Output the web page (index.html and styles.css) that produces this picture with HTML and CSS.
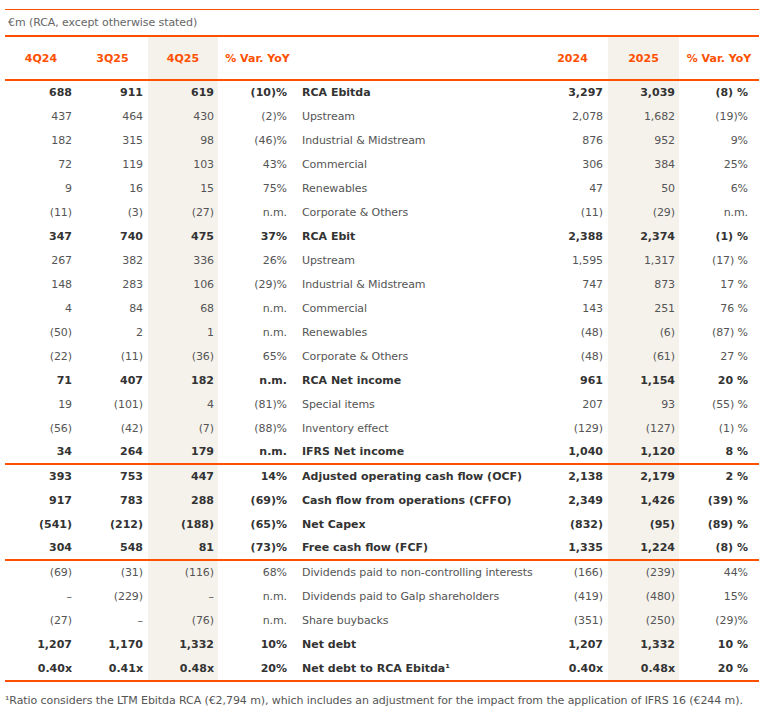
FILE: index.html
```html
<!DOCTYPE html>
<html lang="en">
<head>
<meta charset="utf-8">
<title>Key figures</title>
<link rel="stylesheet" href="styles.css">
</head>
<body>
<div class="report">
  <div class="caption">€m (RCA, except otherwise stated)</div>
  <table class="figures">
    <colgroup>
      <col class="c1"><col class="c2"><col class="c3"><col class="c4"><col class="c5"><col class="c6"><col class="c7"><col class="c8">
    </colgroup>
    <thead>
      <tr>
        <th>4Q24</th><th>3Q25</th><th class="shade">4Q25</th><th>% Var. YoY</th><th class="lbl"></th><th>2024</th><th class="shade">2025</th><th>% Var. YoY</th>
      </tr>
    </thead>
    <tbody>
      <tr class="b"><td>688</td><td>911</td><td class="shade">619</td><td class="pct">(10)%</td><td class="lbl">RCA Ebitda</td><td>3,297</td><td class="shade">3,039</td><td class="pct">(8) %</td></tr>
      <tr><td>437</td><td>464</td><td class="shade">430</td><td class="pct">(2)%</td><td class="lbl">Upstream</td><td>2,078</td><td class="shade">1,682</td><td class="pct">(19)%</td></tr>
      <tr><td>182</td><td>315</td><td class="shade">98</td><td class="pct">(46)%</td><td class="lbl">Industrial &amp; Midstream</td><td>876</td><td class="shade">952</td><td class="pct">9%</td></tr>
      <tr><td>72</td><td>119</td><td class="shade">103</td><td class="pct">43%</td><td class="lbl">Commercial</td><td>306</td><td class="shade">384</td><td class="pct">25%</td></tr>
      <tr><td>9</td><td>16</td><td class="shade">15</td><td class="pct">75%</td><td class="lbl">Renewables</td><td>47</td><td class="shade">50</td><td class="pct">6%</td></tr>
      <tr><td>(11)</td><td>(3)</td><td class="shade">(27)</td><td class="pct">n.m.</td><td class="lbl">Corporate &amp; Others</td><td>(11)</td><td class="shade">(29)</td><td class="pct">n.m.</td></tr>
      <tr class="b"><td>347</td><td>740</td><td class="shade">475</td><td class="pct">37%</td><td class="lbl">RCA Ebit</td><td>2,388</td><td class="shade">2,374</td><td class="pct">(1) %</td></tr>
      <tr><td>267</td><td>382</td><td class="shade">336</td><td class="pct">26%</td><td class="lbl">Upstream</td><td>1,595</td><td class="shade">1,317</td><td class="pct">(17) %</td></tr>
      <tr><td>148</td><td>283</td><td class="shade">106</td><td class="pct">(29)%</td><td class="lbl">Industrial &amp; Midstream</td><td>747</td><td class="shade">873</td><td class="pct">17 %</td></tr>
      <tr><td>4</td><td>84</td><td class="shade">68</td><td class="pct">n.m.</td><td class="lbl">Commercial</td><td>143</td><td class="shade">251</td><td class="pct">76 %</td></tr>
      <tr><td>(50)</td><td>2</td><td class="shade">1</td><td class="pct">n.m.</td><td class="lbl">Renewables</td><td>(48)</td><td class="shade">(6)</td><td class="pct">(87) %</td></tr>
      <tr><td>(22)</td><td>(11)</td><td class="shade">(36)</td><td class="pct">65%</td><td class="lbl">Corporate &amp; Others</td><td>(48)</td><td class="shade">(61)</td><td class="pct">27 %</td></tr>
      <tr class="b"><td>71</td><td>407</td><td class="shade">182</td><td class="pct">n.m.</td><td class="lbl">RCA Net income</td><td>961</td><td class="shade">1,154</td><td class="pct">20 %</td></tr>
      <tr><td>19</td><td>(101)</td><td class="shade">4</td><td class="pct">(81)%</td><td class="lbl">Special items</td><td>207</td><td class="shade">93</td><td class="pct">(55) %</td></tr>
      <tr><td>(56)</td><td>(42)</td><td class="shade">(7)</td><td class="pct">(88)%</td><td class="lbl">Inventory effect</td><td>(129)</td><td class="shade">(127)</td><td class="pct">(1) %</td></tr>
      <tr class="b sep"><td>34</td><td>264</td><td class="shade">179</td><td class="pct">n.m.</td><td class="lbl">IFRS Net income</td><td>1,040</td><td class="shade">1,120</td><td class="pct">8 %</td></tr>
      <tr class="b"><td>393</td><td>753</td><td class="shade">447</td><td class="pct">14%</td><td class="lbl">Adjusted operating cash flow (OCF)</td><td>2,138</td><td class="shade">2,179</td><td class="pct">2 %</td></tr>
      <tr class="b"><td>917</td><td>783</td><td class="shade">288</td><td class="pct">(69)%</td><td class="lbl">Cash flow from operations (CFFO)</td><td>2,349</td><td class="shade">1,426</td><td class="pct">(39) %</td></tr>
      <tr class="b"><td>(541)</td><td>(212)</td><td class="shade">(188)</td><td class="pct">(65)%</td><td class="lbl">Net Capex</td><td>(832)</td><td class="shade">(95)</td><td class="pct">(89) %</td></tr>
      <tr class="b sep"><td>304</td><td>548</td><td class="shade">81</td><td class="pct">(73)%</td><td class="lbl">Free cash flow (FCF)</td><td>1,335</td><td class="shade">1,224</td><td class="pct">(8) %</td></tr>
      <tr><td>(69)</td><td>(31)</td><td class="shade">(116)</td><td class="pct">68%</td><td class="lbl">Dividends paid to non-controlling interests</td><td>(166)</td><td class="shade">(239)</td><td class="pct">44%</td></tr>
      <tr><td>–</td><td>(229)</td><td class="shade">–</td><td class="pct">n.m.</td><td class="lbl">Dividends paid to Galp shareholders</td><td>(419)</td><td class="shade">(480)</td><td class="pct">15%</td></tr>
      <tr><td>(27)</td><td>–</td><td class="shade">(76)</td><td class="pct">n.m.</td><td class="lbl">Share buybacks</td><td>(351)</td><td class="shade">(250)</td><td class="pct">(29)%</td></tr>
      <tr class="b"><td>1,207</td><td>1,170</td><td class="shade">1,332</td><td class="pct">10%</td><td class="lbl">Net debt</td><td>1,207</td><td class="shade">1,332</td><td class="pct">10 %</td></tr>
      <tr class="b sep last"><td>0.40x</td><td>0.41x</td><td class="shade">0.48x</td><td class="pct">20%</td><td class="lbl">Net debt to RCA Ebitda¹</td><td>0.40x</td><td class="shade">0.48x</td><td class="pct">20 %</td></tr>
    </tbody>
  </table>
  <p class="note">¹Ratio considers the LTM Ebitda RCA (€2,794 m), which includes an adjustment for the impact from the application of IFRS 16 (€244 m).</p>
</div>
</body>
</html>
```

FILE: styles.css
```css
html, body {
  margin: 0;
  padding: 0;
  background: #ffffff;
}

body {
  font-family: "DejaVu Sans", Verdana, sans-serif;
  font-size: 11px;
  letter-spacing: -0.08px;
  color: #555555;
}

.report {
  width: 754px;
  margin-left: 5px;
  padding-top: 9px;
}

.caption {
  border-top: 1px solid #fe5000;
  height: 25px;
  line-height: 25px;
  padding-left: 3px;
  color: #666666;
}

.figures {
  width: 754px;
  table-layout: fixed;
  border-collapse: separate;
  border-spacing: 0;
}

.c1 { width: 72px; }
.c2 { width: 71px; }
.c3 { width: 70px; }
.c4 { width: 79px; }
.c5 { width: 240px; }
.c6 { width: 71px; }
.c7 { width: 71px; }
.c8 { width: 80px; }

.figures th {
  height: 42px;
  padding: 0;
  border-top: 2px solid #fe5000;
  border-bottom: 2px solid #fe5000;
  color: #fe5000;
  font-weight: bold;
  letter-spacing: 0;
  text-align: center;
  vertical-align: middle;
}

.figures td {
  line-height: 24px;
  padding: 0 5px 0 0;
  text-align: right;
  vertical-align: middle;
  white-space: nowrap;
  color: #555555;
}

.figures td.shade {
  padding-right: 4px;
}

.figures td.pct {
  padding-right: 10px;
}

.figures td:last-child {
  padding-right: 11px;
}

.figures td.lbl {
  text-align: left;
  padding: 0 0 0 5px;
}

.shade {
  background: #f5f2ec;
}

.figures tr.b td {
  font-weight: bold;
  letter-spacing: 0;
  color: #333333;
}

.figures tr.sep td {
  line-height: 22px;
  border-bottom: 2px solid #fe5000;
}

.figures tr.last td {
  line-height: 23px;
}

.note {
  margin: 0;
  padding-top: 12px;
  line-height: 14px;
  color: #555555;
}
```
